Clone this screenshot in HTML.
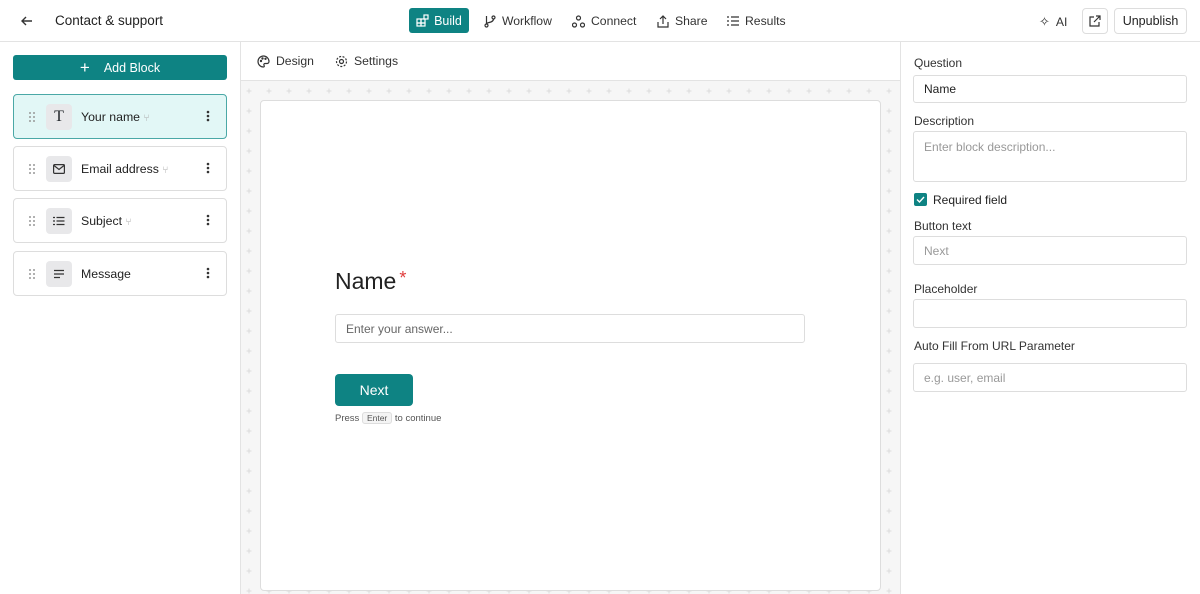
<!DOCTYPE html>
<html><head><meta charset="utf-8"><style>
*{box-sizing:border-box;margin:0;padding:0}
body{width:1200px;height:594px;overflow:hidden;font-family:"Liberation Sans",sans-serif;color:#1f2328;background:#fff;position:relative;font-size:13px}
.a{position:absolute}
.nav{display:flex;align-items:center;gap:6px;font-size:12.2px;color:#333}
.btn{border:1px solid #ddd;border-radius:4px;background:#fff}
.card{position:absolute;left:13px;width:214px;height:45px;border:1px solid #ddd;border-radius:4px;background:#fff}
.card .ic{position:absolute;left:32px;top:9px;width:26px;height:26px;border-radius:4px;background:#e8e8ea;display:flex;align-items:center;justify-content:center}
.card .t{position:absolute;left:67px;top:15px;font-size:12.3px;color:#222}
.card .g{position:absolute;left:14px;top:16px}
.card .d{position:absolute;right:16px;top:15px}
.lbl{position:absolute;left:914px;font-size:12px;color:#333}
.inp{position:absolute;left:913px;width:274px;border:1px solid #ddd;border-radius:3px;font-size:12px;color:#999;padding-left:10px;display:flex;align-items:center}
</style></head><body>
<div class="a" style="left:0;top:41px;width:1200px;height:1px;background:#e3e3e3"></div>
<svg class="a" style="left:20px;top:14px" width="14" height="14" viewBox="0 0 14 14" fill="none" stroke="#333" stroke-width="1.4"><path d="M12 7H2M6 3L2 7l4 4"/></svg>
<div class="a" style="left:55px;top:13px;font-size:13.5px;color:#222">Contact &amp; support</div>
<div class="a" style="left:409px;top:8px;width:60px;height:25px;background:#0e8383;border-radius:3px;color:#fff;font-size:12.5px;display:flex;align-items:center;justify-content:center;gap:5px">
<svg width="13" height="13" viewBox="0 0 13 13" fill="none" stroke="#fff" stroke-width="1.2"><rect x="1" y="5" width="4" height="4"/><rect x="5" y="5" width="4" height="4"/><rect x="1" y="9" width="4" height="3"/><rect x="5" y="9" width="4" height="3"/><rect x="8" y="1" width="4" height="4"/></svg>Build</div>
<div class="a nav" style="left:484px;top:14px"><svg width="12" height="13" viewBox="0 0 12 13" fill="none" stroke="#333" stroke-width="1.2"><circle cx="2.5" cy="10.5" r="1.5"/><circle cx="9.5" cy="2.5" r="1.5"/><path d="M2.5 1v8M9.5 4c0 4-7 3-7 5"/></svg>Workflow</div>
<div class="a nav" style="left:572px;top:14px"><svg width="13" height="13" viewBox="0 0 13 13" fill="none" stroke="#333" stroke-width="1.2"><circle cx="6.5" cy="3" r="2"/><circle cx="2.5" cy="10" r="2"/><circle cx="10.5" cy="10" r="2"/></svg>Connect</div>
<div class="a nav" style="left:657px;top:14px"><svg width="12" height="13" viewBox="0 0 12 13" fill="none" stroke="#333" stroke-width="1.2"><path d="M6 1v8M3 4l3-3 3 3M1 7v5h10V7"/></svg>Share</div>
<div class="a nav" style="left:727px;top:14px"><svg width="12" height="12" viewBox="0 0 12 12" stroke="#333" stroke-width="1.2"><path d="M4 2h8M4 6h8M4 10h8M0 2h2M0 6h2M0 10h2"/></svg>Results</div>
<div class="a nav" style="left:1039px;top:14px"><span style="font-size:13px">✧</span>AI</div>
<div class="a btn" style="left:1082px;top:8px;width:26px;height:26px;display:flex;align-items:center;justify-content:center"><svg width="12" height="12" viewBox="0 0 12 12" fill="none" stroke="#333" stroke-width="1.2"><path d="M5 2H1v9h9V7M7 1h4v4M11 1L5 7"/></svg></div>
<div class="a btn" style="left:1114px;top:8px;width:73px;height:26px;font-size:12.5px;display:flex;align-items:center;justify-content:center;color:#222">Unpublish</div>
<div class="a" style="left:240px;top:42px;width:1px;height:552px;background:#e3e3e3"></div>
<div class="a" style="left:13px;top:55px;width:214px;height:25px;background:#0e8383;border-radius:3px;color:#fff;font-size:12.5px;display:flex;align-items:center;justify-content:center;gap:14px"><span style="font-size:17px;font-weight:300">+</span>Add Block</div>
<div class="card" style="top:94px;background:#e2f7f6;border-color:#4aa8a6"><div class="g"><svg width="8" height="12" fill="#999"><circle cx="2" cy="2" r="1"/><circle cx="6" cy="2" r="1"/><circle cx="2" cy="6" r="1"/><circle cx="6" cy="6" r="1"/><circle cx="2" cy="10" r="1"/><circle cx="6" cy="10" r="1"/></svg></div><div class="ic" style="font-family:'Liberation Serif',serif;font-size:16px">T</div><div class="t">Your name <span style="color:#aaa;font-size:10px">⑂</span></div><div class="d"><svg width="4" height="12" fill="#333"><circle cx="2" cy="2" r="1.3"/><circle cx="2" cy="6" r="1.3"/><circle cx="2" cy="10" r="1.3"/></svg></div></div>
<div class="card" style="top:146px"><div class="g"><svg width="8" height="12" fill="#999"><circle cx="2" cy="2" r="1"/><circle cx="6" cy="2" r="1"/><circle cx="2" cy="6" r="1"/><circle cx="6" cy="6" r="1"/><circle cx="2" cy="10" r="1"/><circle cx="6" cy="10" r="1"/></svg></div><div class="ic"><svg width="12" height="10" fill="none" stroke="#333" stroke-width="1.2"><rect x=".6" y=".6" width="10.8" height="8.8" rx="1"/><path d="M1 1.5l5 4 5-4"/></svg></div><div class="t">Email address <span style="color:#aaa;font-size:10px">⑂</span></div><div class="d"><svg width="4" height="12" fill="#333"><circle cx="2" cy="2" r="1.3"/><circle cx="2" cy="6" r="1.3"/><circle cx="2" cy="10" r="1.3"/></svg></div></div>
<div class="card" style="top:198px"><div class="g"><svg width="8" height="12" fill="#999"><circle cx="2" cy="2" r="1"/><circle cx="6" cy="2" r="1"/><circle cx="2" cy="6" r="1"/><circle cx="6" cy="6" r="1"/><circle cx="2" cy="10" r="1"/><circle cx="6" cy="10" r="1"/></svg></div><div class="ic"><svg width="12" height="10" stroke="#333" stroke-width="1.2"><path d="M3.5 1.5h8M3.5 5h8M3.5 8.5h8M0 1.5h2M0 5h2M0 8.5h2"/></svg></div><div class="t">Subject <span style="color:#aaa;font-size:10px">⑂</span></div><div class="d"><svg width="4" height="12" fill="#333"><circle cx="2" cy="2" r="1.3"/><circle cx="2" cy="6" r="1.3"/><circle cx="2" cy="10" r="1.3"/></svg></div></div>
<div class="card" style="top:251px"><div class="g"><svg width="8" height="12" fill="#999"><circle cx="2" cy="2" r="1"/><circle cx="6" cy="2" r="1"/><circle cx="2" cy="6" r="1"/><circle cx="6" cy="6" r="1"/><circle cx="2" cy="10" r="1"/><circle cx="6" cy="10" r="1"/></svg></div><div class="ic"><svg width="12" height="10" stroke="#333" stroke-width="1.2"><path d="M1 1.5h10M1 5h10M1 8.5h6"/></svg></div><div class="t">Message</div><div class="d"><svg width="4" height="12" fill="#333"><circle cx="2" cy="2" r="1.3"/><circle cx="2" cy="6" r="1.3"/><circle cx="2" cy="10" r="1.3"/></svg></div></div>
<div class="a nav" style="left:257px;top:54px"><svg width="13" height="13" viewBox="0 0 13 13" fill="none" stroke="#333" stroke-width="1.2"><path d="M6.5 1a5.5 5.5 0 100 11c1 0 1-1 .5-1.7-.5-.8 0-1.8 1-1.8H10a2 2 0 002-2C12 3.5 9.5 1 6.5 1z"/><circle cx="4" cy="6" r=".6"/><circle cx="5.5" cy="3.5" r=".6"/><circle cx="8.5" cy="3.8" r=".6"/></svg>Design</div>
<div class="a nav" style="left:335px;top:54px"><svg width="13" height="13" viewBox="0 0 13 13" fill="none" stroke="#333" stroke-width="1.2"><circle cx="6.5" cy="6.5" r="2"/><circle cx="6.5" cy="6.5" r="5" stroke-dasharray="2 1.5"/></svg>Settings</div>
<div class="a" style="left:241px;top:80px;width:659px;height:1px;background:#e3e3e3"></div>
<svg class="a" style="left:241px;top:81px" width="659" height="513"><defs><pattern id="p" x="5" y="7" width="20" height="20" patternUnits="userSpaceOnUse"><path d="M3 0.5v5M0.5 3h5" stroke="#dcdcdc" stroke-width="1"/></pattern></defs><rect width="659" height="513" fill="#f6f6f6"/><rect width="659" height="513" fill="url(#p)"/></svg>
<div class="a" style="left:260px;top:100px;width:621px;height:491px;background:#fff;border:1px solid #ddd;border-radius:4px"></div>
<div class="a" style="left:335px;top:268px;font-size:23px;color:#222">Name<span style="color:#e03c3c;font-size:18px;vertical-align:top;margin-left:3px">*</span></div>
<div class="a" style="left:335px;top:314px;width:470px;height:29px;border:1px solid #ddd;border-radius:3px;font-size:12px;color:#666;padding-left:10px;display:flex;align-items:center">Enter your answer...</div>
<div class="a" style="left:335px;top:374px;width:78px;height:32px;background:#0e8383;border-radius:4px;color:#fff;font-size:14px;display:flex;align-items:center;justify-content:center">Next</div>
<div class="a" style="left:335px;top:413px;font-size:9.5px;color:#555">Press <span style="border:1px solid #ddd;background:#f4f4f4;border-radius:3px;padding:0 4px;font-size:8.5px">Enter</span> to continue</div>
<div class="a" style="left:900px;top:42px;width:1px;height:552px;background:#e3e3e3"></div>
<div class="lbl" style="top:56px">Question</div>
<div class="inp" style="top:75px;height:28px;color:#222">Name</div>
<div class="lbl" style="top:114px">Description</div>
<div class="inp" style="top:131px;height:51px;align-items:flex-start;padding-top:8px">Enter block description...</div>
<div class="a" style="left:914px;top:193px;width:13px;height:13px;background:#0e8383;border-radius:2px"><svg width="13" height="13"><path d="M3 6.5l2.5 2.5L10 4" fill="none" stroke="#fff" stroke-width="1.4"/></svg></div>
<div class="lbl" style="left:933px;top:193px;color:#222">Required field</div>
<div class="lbl" style="top:219px">Button text</div>
<div class="inp" style="top:236px;height:29px">Next</div>
<div class="lbl" style="top:282px">Placeholder</div>
<div class="inp" style="top:299px;height:29px"></div>
<div class="lbl" style="top:339px">Auto Fill From URL Parameter</div>
<div class="inp" style="top:363px;height:29px">e.g. user, email</div>
</body></html>
